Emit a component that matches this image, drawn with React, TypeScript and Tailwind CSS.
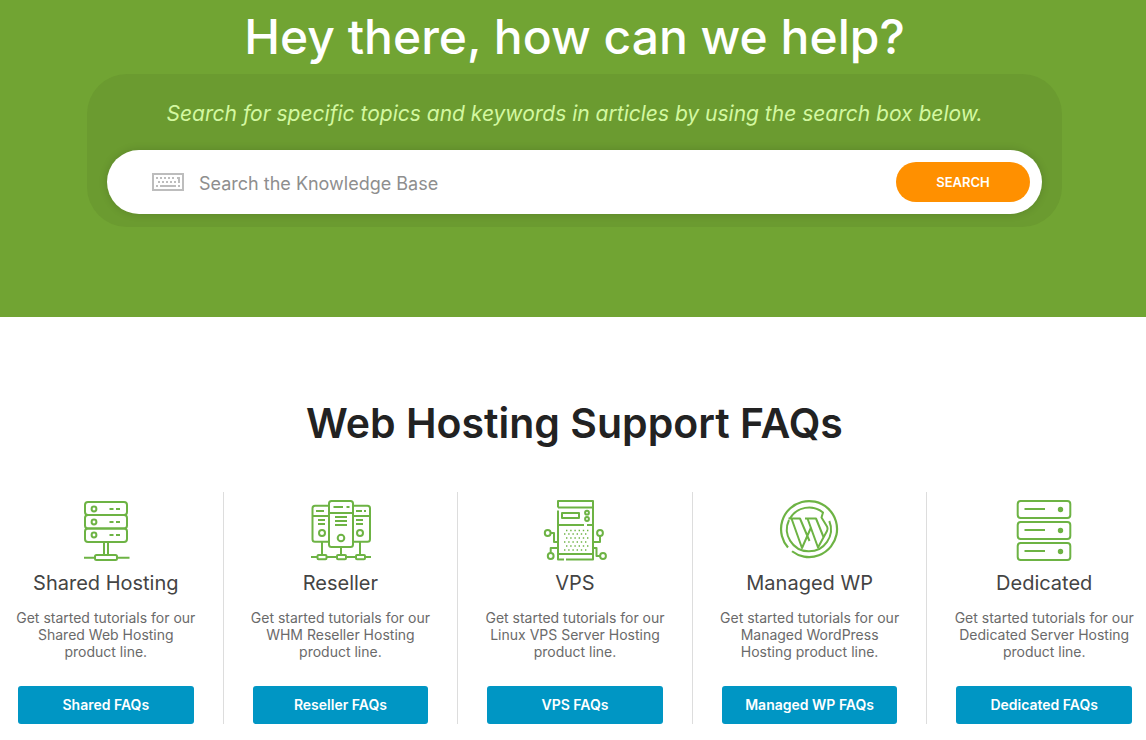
import type { ReactNode } from 'react'

interface Product {
  title: string
  blurb: string
  cta: string
  icon: ReactNode
}

const KeyboardIcon = () => (
  <svg width="32" height="18" viewBox="0 0 32 18" fill="none" stroke="#bdbdbd" aria-hidden="true">
    <rect x="1" y="1" width="30" height="16" strokeWidth="2" />
    <path d="M4 5h20" strokeWidth="2" strokeDasharray="2 2" />
    <path d="M6 9h18" strokeWidth="2" strokeDasharray="2 2" />
    <path d="M25 5h2v5M4 13h2M8 13h16M26 13h2" strokeWidth="2" />
  </svg>
)

const LineIcon = ({ children }: { children: ReactNode }) => (
  <svg
    width="80"
    height="64"
    viewBox="0 8 80 64"
    fill="none"
    stroke="#6db344"
    strokeWidth="2"
    strokeLinejoin="round"
    aria-hidden="true"
  >
    {children}
  </svg>
)

const SharedIcon = () => (
  <LineIcon>
    <rect x="19" y="12" width="42" height="13" rx="3" />
    <rect x="19" y="25" width="42" height="13.5" rx="3" />
    <rect x="19" y="38.5" width="42" height="13.5" rx="3" />
    <circle cx="28" cy="19" r="2.4" />
    <circle cx="28" cy="32" r="2.4" />
    <circle cx="28" cy="45" r="2.4" />
    <path d="M43.5 19h4M50 19h4M43.5 32h4M50 32h4M43.5 45h4M50 45h4" />
    <path d="M38 52v13M42 52v13M18 67.7h11M51 67.7h12.5" />
    <rect x="29" y="65" width="22" height="5" rx="1.5" />
  </LineIcon>
)

const ResellerIcon = () => (
  <LineIcon>
    <path d="M29 15.7H15a2.5 2.5 0 0 0-2.5 2.5v31a2.5 2.5 0 0 0 2.5 2.5h14M12.5 26H29" />
    <path d="M53 15.7h14.5a2.5 2.5 0 0 1 2.5 2.5v31a2.5 2.5 0 0 1-2.5 2.5H53M53 26h17" />
    <rect x="29" y="11" width="24" height="46" rx="2.5" />
    <path d="M29 23h24M33.5 17H43M46.5 17h3" />
    <path
      d="M35 27h12M35 31h12M35 35h12M18 30h7M18 34h7M56 30h7M56 34h7M16 21h8M56 21h6M64 21h2"
      strokeWidth="1.8"
    />
    <circle cx="41" cy="48" r="3.3" />
    <circle cx="22" cy="43" r="3" />
    <circle cx="60" cy="43" r="3" />
    <path d="M22 52v13M41 57v8M60 52v13M11 67h6.5M27 67h10M46 67h10M65 67h6" />
    <rect x="17.5" y="65" width="9" height="4.3" rx="1" />
    <rect x="37" y="65" width="9" height="4.3" rx="1" />
    <rect x="56" y="65" width="9" height="4.3" rx="1" />
  </LineIcon>
)

const VpsIcon = () => (
  <LineIcon>
    <path d="M23 17.5V11H58v58.5H31M23 17.5H58M23 20.5v49H29M23 35H49M52 35h6M23 64H58" />
    <rect x="27" y="23" width="17" height="5" />
    <circle cx="52" cy="22.7" r="1.9" />
    <circle cx="52" cy="29" r="1.9" />
    <path
      d="M31 40.5h23M29 44h23M31 48h23M29 52h23M31 56h23M29 60h23"
      strokeWidth="1.4"
      strokeDasharray="1.4 2.8"
    />
    <circle cx="12.7" cy="43" r="2.9" />
    <circle cx="15.7" cy="66" r="2.9" />
    <circle cx="65" cy="43" r="2.9" />
    <circle cx="68" cy="66" r="2.9" />
    <path d="M15.7 43H19v9h4M15.7 63v-5h7.3M65 46v6h-7M65 66h-3.5v-8H58" />
  </LineIcon>
)

const WordPressIcon = () => (
  <LineIcon>
    <path d="M22 61.25A28 28 0 1 0 18 57.5" strokeWidth="2.2" />
    <path d="M20 28.5A22 22 0 0 1 53 22.5L51.5 27.5 57 36.5Q58 38.5 57 41L48 57.5 37.5 28.5" />
    <path d="M19 30A22 22 0 1 0 59.3 31" />
    <path d="M18.5 28.5H30L39.5 51M21.5 28.5L32 58 41 37.5M35 28.5H46L53.5 47" />
  </LineIcon>
)

const DedicatedIcon = () => (
  <LineIcon>
    {[11, 32, 53].map((y) => (
      <g key={y}>
        <rect x="13.7" y={y} width="52.6" height="17" rx="3" />
        <path d={`M20.5 ${y + 8}H41`} />
        <circle cx="56.5" cy={y + 8.5} r="1.7" fill="#6db344" />
      </g>
    ))}
  </LineIcon>
)

const PRODUCTS: Product[] = [
  {
    title: 'Shared Hosting',
    blurb: 'Get started tutorials for our\nShared Web Hosting\nproduct line.',
    cta: 'Shared FAQs',
    icon: <SharedIcon />,
  },
  {
    title: 'Reseller',
    blurb: 'Get started tutorials for our\nWHM Reseller Hosting\nproduct line.',
    cta: 'Reseller FAQs',
    icon: <ResellerIcon />,
  },
  {
    title: 'VPS',
    blurb: 'Get started tutorials for our\nLinux VPS Server Hosting\nproduct line.',
    cta: 'VPS FAQs',
    icon: <VpsIcon />,
  },
  {
    title: 'Managed WP',
    blurb: 'Get started tutorials for our\nManaged WordPress\nHosting product line.',
    cta: 'Managed WP FAQs',
    icon: <WordPressIcon />,
  },
  {
    title: 'Dedicated',
    blurb: 'Get started tutorials for our\nDedicated Server Hosting\nproduct line.',
    cta: 'Dedicated FAQs',
    icon: <DedicatedIcon />,
  },
]

const SearchHero = () => (
  <section className="bg-[#71a433] pt-2 pr-[84px] pb-[90px] pl-[87px] text-center">
    <h1 className="text-[48px] leading-[58px] font-medium text-white">Hey there, how can we help?</h1>
    <div className="mt-2 rounded-[40px] bg-[#6b9b30] px-5 pt-6 pb-[13px]">
      <p className="text-[21px] leading-8 text-[#d3f8a0] italic">
        Search for specific topics and keywords in articles by using the search box below.
      </p>
      <form
        className="mt-5 flex h-16 items-center rounded-full bg-white pr-3 pl-[45px] shadow-[0_0_8px_rgba(0,0,0,0.15)]"
        onSubmit={(e) => e.preventDefault()}
      >
        <KeyboardIcon />
        <input
          type="search"
          aria-label="Search the Knowledge Base"
          placeholder="Search the Knowledge Base"
          className="ml-[15px] h-10 min-w-0 flex-1 pt-0.5 text-[18px] text-[#555555] outline-none placeholder:text-[#8e8e8e]"
        />
        <button
          type="submit"
          className="h-10 w-[134px] rounded-full bg-[#ff9000] pt-0.5 text-[13px] font-semibold text-white"
        >
          SEARCH
        </button>
      </form>
    </div>
  </section>
)

const ProductColumn = ({ title, blurb, cta, icon }: Product) => (
  <li className="flex flex-col items-center border-l border-[#dddddd] px-[29px] pt-[6px] text-center">
    {icon}
    <h3 className="mt-[7px] text-[20px] leading-7 whitespace-nowrap text-[#444444]">{title}</h3>
    <p className="mt-3 text-[14px] leading-[17px] whitespace-pre text-[#6a6a6a]">{blurb}</p>
    <a
      href="#"
      className="mt-[26px] w-full rounded-[3px] bg-[#0096c4] text-[14px] leading-[38px] font-semibold text-white"
    >
      {cta}
    </a>
  </li>
)

export default function App() {
  return (
    <main className="overflow-hidden bg-white font-['Inter',sans-serif]">
      <SearchHero />
      <section className="-mr-[15px] -ml-3 pt-20 pb-4">
        <h2 className="text-center text-[41px] leading-[52px] font-semibold text-[#222222]">
          Web Hosting Support FAQs
        </h2>
        <ul className="mt-[43px] grid grid-cols-5">
          {PRODUCTS.map((p) => (
            <ProductColumn key={p.title} {...p} />
          ))}
        </ul>
      </section>
    </main>
  )
}
